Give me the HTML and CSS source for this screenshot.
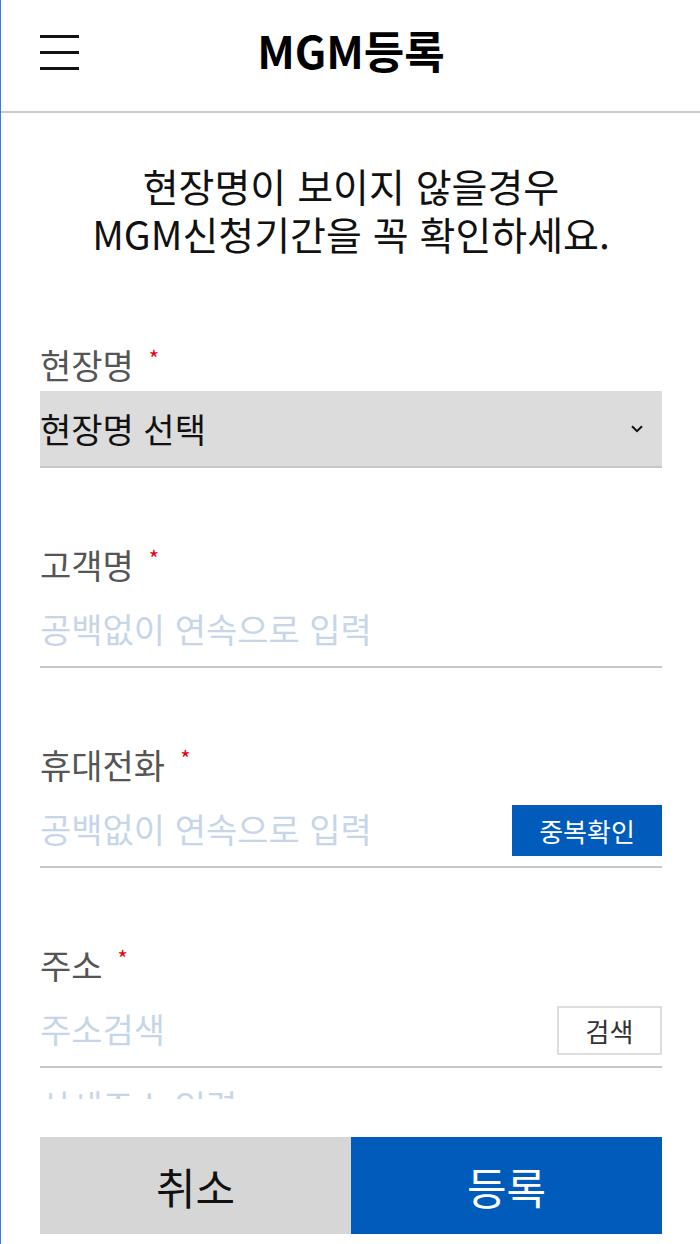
FILE: index.html
```html
<!DOCTYPE html>
<html lang="ko">
<head>
<meta charset="utf-8">
<title>MGM등록</title>
<link rel="stylesheet" href="styles.css">
</head>
<body>
<div class="page">
  <header class="topbar">
    <button class="menu-btn" type="button" aria-label="메뉴"><span></span><span></span><span></span></button>
    <h1 class="title">MGM등록</h1>
    <span class="spacer"></span>
  </header>

  <main class="content">
    <p class="notice"><span class="notice-line">현장명이 보이지 않을경우</span><span class="notice-line">MGM신청기간을 꼭 확인하세요.</span></p>

    <form class="form">
      <div class="field">
        <label class="label">현장명<span class="req">*</span></label>
        <div class="control select">
          <span class="select-text">현장명 선택</span>
          <svg class="chevron" width="12" height="8" viewBox="0 0 12 8"><path d="M1 1.2 L6 6.2 L11 1.2" fill="none" stroke="#111" stroke-width="2"/></svg>
        </div>
      </div>

      <div class="field">
        <label class="label">고객명<span class="req">*</span></label>
        <div class="control">
          <input class="input" type="text" placeholder="공백없이 연속으로 입력">
        </div>
      </div>

      <div class="field">
        <label class="label">휴대전화<span class="req">*</span></label>
        <div class="control">
          <input class="input" type="tel" placeholder="공백없이 연속으로 입력">
          <button class="dup-btn" type="button">중복확인</button>
        </div>
      </div>

      <div class="field field-last">
        <label class="label">주소<span class="req">*</span></label>
        <div class="control">
          <input class="input" type="text" placeholder="주소검색">
          <button class="search-btn" type="button">검색</button>
        </div>
        <div class="control">
          <input class="input" type="text" placeholder="상세주소 입력">
        </div>
      </div>
    </form>
  </main>

  <footer class="actions">
    <button class="act cancel" type="button">취소</button>
    <button class="act submit" type="button">등록</button>
  </footer>
</div>
</body>
</html>
```

FILE: styles.css
```css
html, body {
  margin: 0;
  padding: 0;
  background: #fff;
}

body {
  font-family: "Noto Sans CJK KR", "Noto Sans", sans-serif;
  color: #111;
}

.page {
  min-height: 100vh;
  box-sizing: border-box;
  border-left: 1px solid #2f7fe6;
}

/* header */
.topbar {
  height: 111px;
  border-bottom: 2px solid #cacaca;
  display: grid;
  grid-template-columns: 1fr auto 1fr;
  align-items: center;
  padding: 0 38px 0 39px;
}

.menu-btn {
  align-self: start;
  margin-top: 35px;
  width: 39px;
  height: 35px;
  padding: 0;
  border: 0;
  background: none;
  display: flex;
  flex-direction: column;
  justify-content: space-between;
}

.menu-btn span {
  display: block;
  height: 3px;
  background: #111;
}

.title {
  margin: 0 0 11px;
  font-size: 44px;
  font-weight: 700;
  line-height: 1;
  color: #000;
}

/* content */
.content {
  padding: 0 38px 0 39px;
}

.notice {
  margin: 48px 0 88px;
  display: flex;
  flex-direction: column;
  align-items: center;
  font-size: 39px;
  color: #111;
}

.notice-line {
  display: block;
  height: 48px;
  line-height: 48px;
  white-space: nowrap;
}

.form {
  margin: 0;
}

.field {
  margin-bottom: 77px;
}

.field-last {
  margin-bottom: 0;
}

.label {
  display: block;
  font-size: 34px;
  line-height: 40px;
  color: #555;
  margin-bottom: 6px;
}

.req {
  display: inline-block;
  color: #e60012;
  font-size: 22px;
  line-height: 1;
  vertical-align: top;
  margin-left: 15px;
  margin-top: 1px;
}

.control {
  height: 75px;
  border-bottom: 2px solid #c8c8c8;
  display: flex;
  align-items: center;
}

.select {
  background: #dcdcdc;
  justify-content: space-between;
  padding-right: 19px;
}

.select-text {
  font-size: 34px;
  color: #111;
}

.chevron {
  display: block;
}

.input {
  flex: 1;
  min-width: 0;
  border: 0;
  outline: none;
  background: transparent;
  padding: 0;
  font-family: inherit;
  font-size: 34px;
  color: #111;
}

.input::placeholder {
  color: #c6d6e8;
}

.dup-btn {
  width: 150px;
  height: 51px;
  border: 0;
  background: #005bbb;
  color: #fff;
  font-family: inherit;
  font-size: 26px;
  padding: 0;
  margin-top: 4px;
}

.search-btn {
  width: 105px;
  height: 49px;
  border: 2px solid #dedede;
  background: #fff;
  color: #333;
  font-family: inherit;
  font-size: 26px;
  padding: 0;
  margin-top: 4px;
}

/* fixed bottom actions */
.actions {
  position: fixed;
  left: 1px;
  right: 0;
  bottom: 0;
  height: 145px;
  box-sizing: border-box;
  padding: 38px 38px 10px 39px;
  background: #fff;
  display: grid;
  grid-template-columns: 1fr 1fr;
}

.act {
  border: 0;
  padding: 0;
  font-family: inherit;
  font-size: 43px;
}

.cancel {
  background: #d6d6d6;
  color: #111;
}

.submit {
  background: #005bbb;
  color: #fff;
}
```
